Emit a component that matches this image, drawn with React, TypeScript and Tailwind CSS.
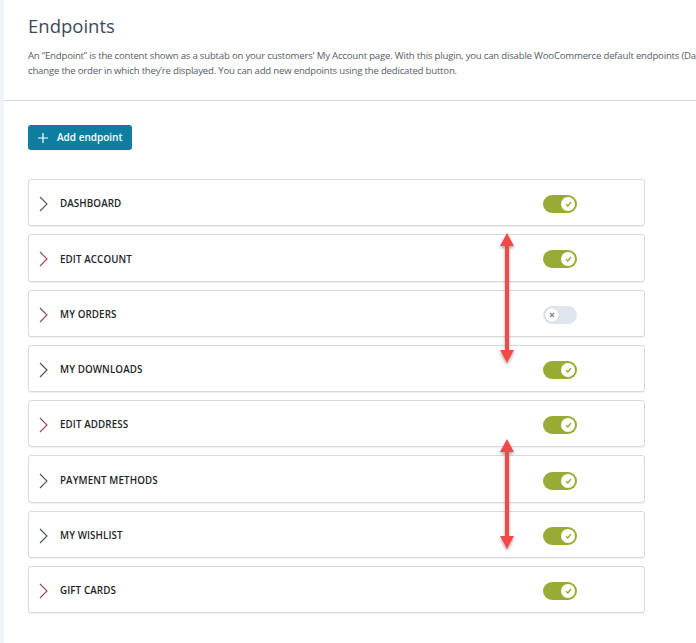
import React from "react";

type Row = { label: string; on: boolean; chev: string };

const rows: Row[] = [
  { label: "DASHBOARD", on: true, chev: "#4d5e4a" },
  { label: "EDIT ACCOUNT", on: true, chev: "#9a3f63" },
  { label: "MY ORDERS", on: false, chev: "#7d4a5e" },
  { label: "MY DOWNLOADS", on: true, chev: "#4a4a4a" },
  { label: "EDIT ADDRESS", on: true, chev: "#9a3f63" },
  { label: "PAYMENT METHODS", on: true, chev: "#3f5a3f" },
  { label: "MY WISHLIST", on: true, chev: "#3f5a3f" },
  { label: "GIFT CARDS", on: true, chev: "#9a3f63" },
];

function Chevron({ color }: { color: string }) {
  return (
    <svg width="9" height="16" viewBox="0 0 9 16" fill="none">
      <path d="M1 1 L8 8 L1 15" stroke={color} strokeWidth="1.1" />
    </svg>
  );
}

function Toggle({ on }: { on: boolean }) {
  if (on) {
    return (
      <div className="flex h-[18px] w-[34px] items-center justify-end rounded-full bg-[#9aab35] pr-[2px]">
        <div className="flex h-[14px] w-[14px] items-center justify-center rounded-full bg-white">
          <svg width="7" height="6" viewBox="0 0 7 6" fill="none">
            <path d="M1 3.2 L2.8 5 L6 1" stroke="#9aab35" strokeWidth="1.4" />
          </svg>
        </div>
      </div>
    );
  }
  return (
    <div className="flex h-[18px] w-[34px] items-center justify-start rounded-full bg-[#dfe6ee] pl-[2px]">
      <div className="flex h-[14px] w-[14px] items-center justify-center rounded-full bg-white shadow-[0_0_1px_rgba(0,0,0,0.3)]">
        <svg width="6" height="6" viewBox="0 0 6 6" fill="none">
          <path d="M1 1 L5 5 M5 1 L1 5" stroke="#7d8896" strokeWidth="1.3" />
        </svg>
      </div>
    </div>
  );
}

function DoubleArrow({ height }: { height: number }) {
  return (
    <svg width="24" height={height + 8} viewBox={`0 0 24 ${height + 8}`} fill="none">
      <defs>
        <filter id="sh" x="-50%" y="-10%" width="200%" height="120%">
          <feDropShadow dx="0" dy="2" stdDeviation="1.5" floodColor="#000" floodOpacity="0.35" />
        </filter>
      </defs>
      <g filter="url(#sh)">
        <polygon points={`12,1 19,14 5,14`} fill="#f34a4a" />
        <rect x="10" y="13" width="4" height={height - 26} fill="#f34a4a" />
        <polygon points={`12,${height - 1} 19,${height - 14} 5,${height - 14}`} fill="#f34a4a" />
      </g>
    </svg>
  );
}

export default function App() {
  return (
    <div
      className="relative flex min-h-[643px] w-[696px] overflow-hidden bg-white"
      style={{ fontFamily: '"Open Sans", "Noto Sans", sans-serif' }}
    >
      <div className="w-[4px] shrink-0 bg-[#f0f3f8]" />
      <div className="flex min-w-0 flex-1 flex-col">
        <div className="h-[101px] overflow-hidden border-b border-[#cfd8e3] pl-[24px] pt-[12px]">
          <h1 className="text-[18.5px] font-medium leading-[28px] text-[#3b4a5c]">Endpoints</h1>
          <div className="mt-[8px] text-[9.6px] leading-[15px] tracking-[-0.2px] text-[#555d66]">
            <div className="whitespace-nowrap">
              An “Endpoint” is the content shown as a subtab on your customers' My Account page. With this plugin, you can disable WooCommerce default endpoints (Da
            </div>
            <div className="whitespace-nowrap">
              change the order in which they’re displayed. You can add new endpoints using the dedicated button.
            </div>
          </div>
        </div>

        <div className="pl-[24px] pt-[24px]">
          <button className="flex h-[25px] w-[104px] items-center gap-[9px] rounded-[3px] bg-[#0e7ea0] pl-[10px] text-[10px] font-semibold text-white">
            <svg width="10" height="10" viewBox="0 0 10 10" fill="none">
              <path d="M5 0 V10 M0 5 H10" stroke="white" strokeWidth="1.2" />
            </svg>
            Add endpoint
          </button>
        </div>

        <div className="flex w-[641px] flex-col gap-[8px] pl-[24px] pt-[29px]">
          {rows.map((r) => (
            <div
              key={r.label}
              className="flex h-[47.3px] items-center rounded-[3px] border border-[#d9d9d9] bg-white pl-[10px] pt-[3px] shadow-[0_1px_1px_rgba(0,0,0,0.06)]"
            >
              <Chevron color={r.chev} />
              <span className="ml-[12px] pt-[1px] text-[9.8px] font-semibold tracking-[0.1px] text-[#1d2327]">{r.label}</span>
              <div className="ml-auto mr-[67px]">
                <Toggle on={r.on} />
              </div>
            </div>
          ))}
        </div>
        <div className="h-[40px]" />
      </div>

      <div className="absolute left-[495px] top-[232px]">
        <DoubleArrow height={132} />
      </div>
      <div className="absolute left-[495px] top-[438px]">
        <DoubleArrow height={112} />
      </div>
    </div>
  );
}
